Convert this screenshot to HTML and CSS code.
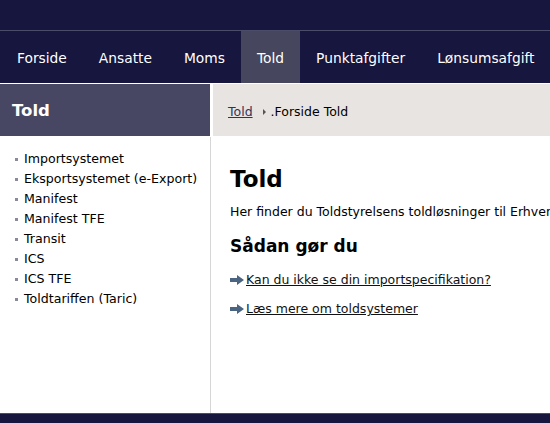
FILE: index.html
```html
<!DOCTYPE html>
<html lang="da">
<head>
<meta charset="utf-8">
<title>Told</title>
<link rel="stylesheet" href="styles.css">
</head>
<body>
<div class="top"></div>
<nav class="nav">
  <a class="nav-item" href="#">Forside</a>
  <a class="nav-item" href="#">Ansatte</a>
  <a class="nav-item" href="#">Moms</a>
  <a class="nav-item active" href="#">Told</a>
  <a class="nav-item" href="#">Punktafgifter</a>
  <a class="nav-item" href="#">Lønsumsafgift</a>
</nav>
<div class="band">
  <div class="side-head">Told</div>
  <div class="crumbs">
    <a class="crumb-link" href="#">Told</a>
    <span class="crumb-sep"></span>
    <span class="crumb-cur">.Forside Told</span>
  </div>
</div>
<div class="body">
  <aside class="sidebar">
    <ul class="side-list">
      <li>Importsystemet</li>
      <li>Eksportsystemet (e-Export)</li>
      <li>Manifest</li>
      <li>Manifest TFE</li>
      <li>Transit</li>
      <li>ICS</li>
      <li>ICS TFE</li>
      <li>Toldtariffen (Taric)</li>
    </ul>
  </aside>
  <main class="main">
    <h1 class="title">Told</h1>
    <p class="intro">Her finder du Toldstyrelsens toldløsninger til Erhvervslivet.</p>
    <h2 class="subtitle">Sådan gør du</h2>
    <a class="arrow-link" href="#"><svg class="arrow" width="14" height="10" viewBox="0 0 14 10"><path d="M0 3h7V0l7 5-7 5V7H0z" fill="#4b6482"/></svg><span>Kan du ikke se din importspecifikation?</span></a>
    <a class="arrow-link" href="#"><svg class="arrow" width="14" height="10" viewBox="0 0 14 10"><path d="M0 3h7V0l7 5-7 5V7H0z" fill="#4b6482"/></svg><span>Læs mere om toldsystemer</span></a>
  </main>
</div>
<footer class="footer"></footer>
</body>
</html>
```
FILE: styles.css
```css
* { box-sizing: border-box; }
html, body { margin: 0; padding: 0; }
body {
  font-family: "DejaVu Sans", Verdana, sans-serif;
  color: #000;
  background: #fff;
  width: 550px;
  height: 423px;
  overflow: hidden;
  display: flex;
  flex-direction: column;
}
.top {
  height: 31px;
  background: #16163e;
  border-bottom: 1px solid #4b4b6b;
  flex: none;
}
.nav {
  display: flex;
  height: 53px;
  background: #16163e;
  border-bottom: 1px solid #fff;
  flex: none;
  white-space: nowrap;
}
.nav-item {
  color: #fff;
  text-decoration: none;
  font-size: 13.8px;
  line-height: 54px;
  padding: 0 16px 0 16px;
}
.nav-item:first-child { padding-left: 17px; }
.nav-item.active { background: #46465f; }
.band {
  display: flex;
  height: 53px;
  flex: none;
  border-bottom: 1px solid #fff;
}
.side-head {
  width: 210px;
  background: #474763;
  color: #fff;
  font-weight: bold;
  font-size: 16.5px;
  padding-left: 12px;
  line-height: 54px;
}
.crumbs {
  flex: 1;
  margin-left: 3px;
  background: #e8e4e1;
  display: flex;
  align-items: center;
  padding: 2px 0 0 15px;
  font-size: 12.5px;
}
.crumb-link { color: #33335a; }
.crumb-sep {
  width: 0; height: 0;
  border-top: 3px solid transparent;
  border-bottom: 3px solid transparent;
  border-left: 3px solid #555;
  margin: 2px 5px 0 10px;
}
.body {
  display: flex;
  flex: none;
  height: 276px;
}
.sidebar {
  width: 211px;
  border-right: 1px solid #d6d6d6;
  padding-top: 12px;
}
.side-list {
  list-style: none;
  margin: 0;
  padding: 0 0 0 12px;
  font-size: 12.6px;
}
.side-list li {
  line-height: 20px;
  display: flex;
  align-items: center;
}
.side-list li::before {
  content: "";
  width: 3px; height: 3px;
  background: #8a8a9a;
  margin: 1px 6px 0 3px;
}
.main {
  flex: 1;
  padding: 27px 0 0 19px;
  white-space: nowrap;
  overflow: hidden;
}
.title {
  font-size: 23px;
  margin: 0;
  line-height: 30px;
}
.intro {
  font-size: 12.5px;
  margin: 10px 0 0;
  line-height: 16px;
}
.subtitle {
  font-size: 17px;
  margin: 14px 0 0;
  line-height: 24px;
}
.arrow-link {
  display: flex;
  align-items: center;
  color: #111;
  font-size: 12.5px;
  line-height: 16px;
  margin-top: 14px;
  text-decoration: none;
}
.arrow-link span { text-decoration: underline; }
.arrow-link + .arrow-link { margin-top: 13px; }
.arrow { margin-right: 2px; flex: none; }
.footer {
  flex: 1;
  background: #16163e;
  border-top: 1px solid #4b4b6b;
}
```
